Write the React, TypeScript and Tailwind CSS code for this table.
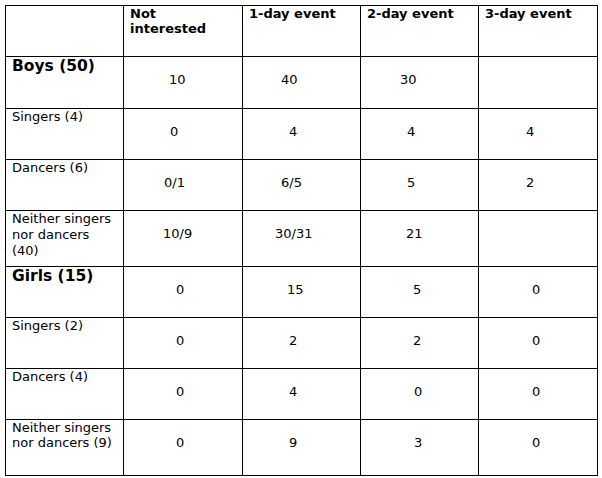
type Row = {
  label: string;
  group?: boolean;
  loose?: boolean;
  cells: [string, number][];
};

const headers = ["Not interested", "1-day event", "2-day event", "3-day event"];

// [text, left padding in px] — the source doc has ragged, hand-spaced numbers
const rows: Row[] = [
  { label: "Boys (50)", group: true, cells: [["10", 45], ["40", 38], ["30", 39], ["", 0]] },
  { label: "Singers (4)", cells: [["0", 46], ["4", 46], ["4", 46], ["4", 47]] },
  { label: "Dancers (6)", cells: [["0/1", 40], ["6/5", 38], ["5", 46], ["2", 47]] },
  { label: "Neither singers nor dancers (40)", loose: true, cells: [["10/9", 39], ["30/31", 32], ["21", 45], ["", 0]] },
  { label: "Girls (15)", group: true, cells: [["0", 52], ["15", 44], ["5", 52], ["0", 53]] },
  { label: "Singers (2)", cells: [["0", 52], ["2", 46], ["2", 52], ["0", 53]] },
  { label: "Dancers (4)", cells: [["0", 52], ["4", 46], ["0", 53], ["0", 53]] },
  { label: "Neither singers nor dancers (9)", cells: [["0", 52], ["9", 46], ["3", 53], ["0", 53]] },
];

export default function App() {
  return (
    <div className="min-h-screen bg-white pt-[5px] pl-[5px] font-['DejaVu_Sans',sans-serif] text-[13px] leading-[15px] text-black">
      <div
        className="grid w-[593px] gap-px bg-black p-px"
        style={{
          gridTemplateColumns: "117px 118px 117px 117px 118px",
          gridTemplateRows: "50px 51px 50px 50px 55px 50px 50px 50px 55px",
        }}
      >
        <div className="bg-white" />
        {headers.map(h => (
          <div key={h} className="bg-white pl-[6px] pr-[20px] font-bold">
            {h}
          </div>
        ))}

        {rows.map(r => (
          <Line key={r.label} row={r} />
        ))}
      </div>
    </div>
  );
}

function Line({ row }: { row: Row }) {
  let labelClass = "bg-white pl-[6px] pr-[4px]";
  if (row.group) labelClass = "bg-white pl-[6px] text-[15.5px] leading-[18px] font-bold";
  if (row.loose) labelClass = "bg-white pl-[6px] pr-[4px] leading-[16px]";

  return (
    <>
      <div className={labelClass}>{row.label}</div>
      {row.cells.map(([text, pad], i) => (
        <div key={i} className="bg-white pt-[15px]" style={{ paddingLeft: pad }}>
          {text}
        </div>
      ))}
    </>
  );
}
